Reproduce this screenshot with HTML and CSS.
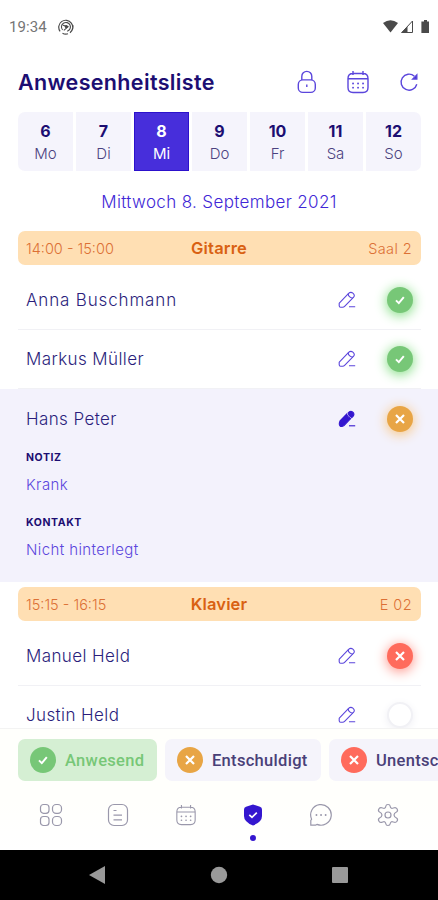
FILE: index.html
```html
<!DOCTYPE html>
<html lang="de">
<head>
    <meta charset="UTF-8">
    <meta name="viewport" content="width=device-width, initial-scale=1.0">
    <title>Anwesenheitsliste</title>
    <link rel="stylesheet" href="styles.css">
</head>
<body>
<!-- shared icons -->
<svg class="sprite" aria-hidden="true">
    <symbol id="check" viewBox="0 0 26 26">
        <path d="M9 13.4l2.8 2.7 5-6" fill="none" stroke="#fff" stroke-width="2"/>
    </symbol>
    <symbol id="cross" viewBox="0 0 26 26">
        <path d="M9 9l8 8M17 9l-8 8" fill="none" stroke="#fff" stroke-width="2.2"/>
    </symbol>
    <symbol id="pen" viewBox="0 0 18 18">
        <path d="M1.3 12.2L10.6 2.4Q12.7.4 14.9 2.1 17.4 4.2 15.4 6.5L6.6 15.4Q5.8 16.2 4.6 16.2H2.6Q1.2 16.2 1.2 14.7V13Q1.1 12.5 1.3 12.2Z"/>
        <path d="M10.2 2.8Q10.4 6.6 14.8 7.1M11 15.8h6.2"/>
    </symbol>
    <symbol id="pen-filled" viewBox="0 0 18 18">
        <path d="M2 11L8.6 4.2Q9.2 6.8 12.6 8.6L6 15.6Q4 17 2.2 16.2 1 15.6 1.3 13Z"/>
        <path d="M10 3Q12.2.4 14.6 1.9 17 4 15 6.4L13.8 7.6Q10.8 6.4 10 3Z"/>
        <path d="M11 15.8h6.2"/>
    </symbol>
    <symbol id="calendar" viewBox="0 0 22 24">
        <path d="M6 3.5h10q5 0 5 5v9q0 5-5 5H6q-5 0-5-5v-9q0-5 5-5ZM1 8.8h20M6 1v4M16 1v4"/>
        <path class="dots" d="M6 13.5h.1M11 13.5h.1M16 13.5h.1M6 17.7h.1M11 17.7h.1M16 17.7h.1"/>
    </symbol>
</svg>

<div class="screen">
    <div class="status-bar">
        <span class="clock">19:34</span>
        <svg width="16" height="16" viewBox="0 0 16 16" fill="none" stroke="#4a4a4a">
            <path d="M2.1 12.4A7 7 0 1 1 12 13.8M14.8 6.2A7 7 0 0 1 14.2 11M4.5 14.2A7 7 0 0 0 10 14.8" stroke-width="1.2"/>
            <path d="M4.6 11A4.5 4.5 0 1 1 9.2 12.3M5 6.2L10 7.8 5.8 11.3" stroke-width="1.1"/>
            <circle cx="8.3" cy="7.6" r="1.6" fill="#4a4a4a" stroke="none"/>
        </svg>
        <svg class="status-icons" width="48" height="16" viewBox="0 0 48 16" fill="#4a4a4a">
            <path d="M0 4Q7.5-1.6 15 4L7.5 13.6Z"/>
            <path d="M29.5 2V13.5H18.8Z" fill="none" stroke="#4a4a4a"/>
            <path d="M24.5 7.5V14H18Z"/>
            <path d="M41 1h3v1.6h2V14h-7.6V2.6H41Z"/>
        </svg>
    </div>

    <header class="header">
        <h1>Anwesenheitsliste</h1>
        <div class="actions">
            <svg width="20" height="24" viewBox="0 0 20 24">
                <rect x="1.3" y="9.9" width="17" height="12.5" rx="4.5"/>
                <path d="M4.8 9.9V6.4a5 5 0 0 1 10 0v3.5M9.8 14.4v2.6"/>
            </svg>
            <svg width="22" height="24"><use href="#calendar"/></svg>
            <svg width="20" height="20" viewBox="0 0 20 20">
                <path d="M17.8 12.2A8 8 0 1 1 15.4 4.2"/>
                <path d="M17.8 3V7h-4Z" fill="#4027d6"/>
            </svg>
        </div>
    </header>

    <div class="week">
        <div class="day"><b>6</b><span>Mo</span></div>
        <div class="day"><b>7</b><span>Di</span></div>
        <div class="day active"><b>8</b><span>Mi</span></div>
        <div class="day"><b>9</b><span>Do</span></div>
        <div class="day"><b>10</b><span>Fr</span></div>
        <div class="day"><b>11</b><span>Sa</span></div>
        <div class="day"><b>12</b><span>So</span></div>
    </div>
    <div class="date">Mittwoch 8. September 2021</div>

    <main class="list">
        <div class="course">
            <span>14:00 - 15:00</span>
            <strong>Gitarre</strong>
            <span class="room">Saal 2</span>
        </div>
        <div class="student">
            <span class="name wide">Anna Buschmann</span>
            <svg class="pen"><use href="#pen"/></svg>
            <svg class="status present"><use href="#check"/></svg>
        </div>
        <div class="student">
            <span class="name">Markus Müller</span>
            <svg class="pen"><use href="#pen"/></svg>
            <svg class="status present"><use href="#check"/></svg>
        </div>
        <div class="open">
            <div class="student">
                <span class="name">Hans Peter</span>
                <svg class="pen filled"><use href="#pen-filled"/></svg>
                <svg class="status excused"><use href="#cross"/></svg>
            </div>
            <div class="details">
                <h2>NOTIZ</h2>
                <p>Krank</p>
                <h2>KONTAKT</h2>
                <p>Nicht hinterlegt</p>
            </div>
        </div>
        <div class="course">
            <span>15:15 - 16:15</span>
            <strong>Klavier</strong>
            <span class="room">E 02</span>
        </div>
        <div class="student">
            <span class="name">Manuel Held</span>
            <svg class="pen"><use href="#pen"/></svg>
            <svg class="status absent"><use href="#cross"/></svg>
        </div>
        <div class="student">
            <span class="name">Justin Held</span>
            <svg class="pen"><use href="#pen"/></svg>
            <svg class="status empty"></svg>
        </div>
    </main>

    <footer class="bottom">
        <div class="chips">
            <div class="chip selected"><svg class="badge present"><use href="#check"/></svg><span>Anwesend</span></div>
            <div class="chip second"><svg class="badge excused"><use href="#cross"/></svg><span>Entschuldigt</span></div>
            <div class="chip third"><svg class="badge absent"><use href="#cross"/></svg><span>Unentschuldigt</span></div>
        </div>
        <nav class="tabs">
            <svg width="24" height="24" viewBox="0 0 24 24">
                <rect x="1.5" y="1.5" width="8.5" height="8.8" rx="3"/>
                <rect x="13.5" y="1.5" width="9" height="8.8" rx="3.6"/>
                <rect x="1.5" y="13.5" width="8.5" height="9" rx="3"/>
                <rect x="13.5" y="13.5" width="9" height="9" rx="3.6"/>
            </svg>
            <svg width="24" height="24" viewBox="0 0 24 24">
                <rect x="2.5" y="1.5" width="19" height="21" rx="5.5"/>
                <path d="M7.5 7.5h3M7.5 12.2h8.5M7.5 16.8h8.5"/>
            </svg>
            <svg width="24" height="24" viewBox="0 0 24 24"><use href="#calendar" x="1.5" y="1" width="21" height="22"/></svg>
            <div class="tab-active">
                <svg width="24" height="24" viewBox="0 0 24 24">
                    <path d="M12 1.5L19 3.8Q21 4.5 21 6.5V13Q21 19 12 22.5 3 19 3 13V6.5Q3 4.5 5 3.8Z" fill="#3417cf" stroke="none"/>
                    <path d="M8.3 11.8l2.7 2.6 4.8-4.8" stroke="#fff" stroke-width="1.7"/>
                </svg>
            </div>
            <svg width="24" height="24" viewBox="0 0 24 24">
                <path d="M1.8 22.2V17.5L2.6 16.2A10.3 10.3 0 1 1 8 21.4L6.5 22.2Z"/>
                <path class="dots" d="M7.4 12h.1M12 12h.1M16.6 12h.1"/>
            </svg>
            <svg width="24" height="24" viewBox="0 0 24 24">
                <path d="M9.8 3.2Q10 1.5 12 1.5T14.2 3.2Q14.5 6.1 17.3 5 19.8 3.8 21 5.8T20.8 8.8Q18 10.2 18 12T20.8 15.2Q22.2 16.3 21 18.2T17.3 19Q14.5 17.9 14.2 20.8 14 22.5 12 22.5T9.8 20.8Q9.5 17.9 6.7 19 4.2 20.2 3 18.2T3.2 15.2Q6 13.8 6 12T3.2 8.8Q1.8 7.7 3 5.8T6.7 5Q9.5 6.1 9.8 3.2Z"/>
                <circle cx="12" cy="12" r="3"/>
            </svg>
        </nav>
    </footer>

    <div class="android-nav">
        <svg width="18" height="20"><path d="M17 1V19L1 10Z"/></svg>
        <svg width="18" height="18"><circle cx="9" cy="9" r="8.2"/></svg>
        <svg width="18" height="18"><rect x="1" y="1" width="16" height="16" rx="1"/></svg>
    </div>
</div>
</body>
</html>
```
FILE: styles.css
```css
* {
    box-sizing: border-box;
}
body {
    margin: 0;
    font-family: Inter, sans-serif;
    color: #2b1e7c;
}
.sprite {
    display: none;
}
.screen {
    display: flex;
    flex-direction: column;
    width: 438px;
    height: 900px;
    overflow: hidden;
    background: #fff;
}

/* top */
.status-bar {
    display: flex;
    align-items: center;
    height: 54px;
    padding: 0 7px 0 9px;
    font-family: Roboto, sans-serif;
    font-size: 15px;
    color: #757575;
}
.clock {
    width: 49px;
    letter-spacing: 0.1px;
}
.status-icons {
    margin-left: auto;
}
.header {
    display: flex;
    align-items: center;
    justify-content: space-between;
    height: 58px;
    padding: 0 19px 2px 18px;
}
h1 {
    margin: 0;
    font-size: 21.5px;
    font-weight: 600;
    letter-spacing: 0.35px;
    color: #1c0e72;
}
.actions {
    display: flex;
    align-items: center;
    gap: 30px;
}
.actions svg {
    fill: none;
    stroke: #5b46dc;
    stroke-width: 1.4;
}
.dots {
    stroke-width: 1.8;
    stroke-linecap: round;
}
.week {
    display: grid;
    grid-template-columns: repeat(7, 55px);
    gap: 3px;
    height: 59px;
    padding-left: 18px;
}
.day {
    display: flex;
    flex-direction: column;
    align-items: center;
    padding-top: 8px;
    background: #f5f4fc;
    font-size: 15px;
    font-weight: 300;
    line-height: 24px;
    color: #4b4280;
}
.day b {
    height: 22px;
    font-size: 16px;
    font-weight: 700;
    line-height: 22px;
    color: #1c0e72;
}
.day:first-child {
    border-radius: 7px 0 0 7px;
}
.day:last-child {
    border-radius: 0 7px 7px 0;
}
.day.active {
    background: #472edb;
    border: 1px solid #2c11cc;
    padding-top: 7px;
    color: #fff;
    font-weight: 400;
}
.day.active b {
    color: #fff;
}
.date {
    height: 60px;
    line-height: 62px;
    text-align: center;
    font-size: 17px;
    font-weight: 300;
    letter-spacing: 0.35px;
    color: #4027d6;
}

/* student list */
.list {
    height: 497px;
    overflow: hidden;
}
.course {
    display: grid;
    grid-template-columns: 1fr 1fr 1fr;
    align-items: center;
    height: 34px;
    margin: 0 17px 5px 18px;
    padding: 0 9px 0 8px;
    border-radius: 7px;
    background: #ffdfb3;
    font-size: 14.5px;
    color: #dc7035;
    font-weight: 300;
}
.course strong {
    text-align: center;
    font-size: 16.5px;
    font-weight: 600;
    letter-spacing: 0.15px;
    color: #d96112;
}
.room {
    text-align: right;
    letter-spacing: 0.4px;
}
.student {
    display: flex;
    align-items: center;
    height: 59.5px;
    margin: 0 17px 0 18px;
    padding: 1px 8px 0;
    border-bottom: 1px solid #f1f1f5;
}
.name {
    flex: 1;
    font-size: 17px;
    font-weight: 300;
    letter-spacing: 0.4px;
}
.name.wide {
    letter-spacing: 0.85px;
}
.pen {
    width: 18px;
    height: 18px;
    margin-right: 31px;
    fill: none;
    stroke: #5b46dc;
    stroke-width: 1.1;
}
.pen.filled {
    fill: #3417cf;
    stroke: #3417cf;
}
.status,
.badge {
    width: 26px;
    height: 26px;
    border-radius: 50%;
}
.present {
    background: #77c777;
}
.excused {
    background: #e8a545;
}
.absent {
    background: #ff6b5c;
}
.status.present {
    box-shadow: 0 2px 12px 1px #8be08b;
}
.status.excused {
    box-shadow: 0 2px 12px 1px #f8c98a;
}
.status.absent {
    box-shadow: 0 2px 12px 1px #ff9c92;
}
.status.empty {
    background: #fff;
    border: 2px solid #f1f1f5;
    box-shadow: 0 2px 9px #efeff4;
}
.open {
    height: 193px;
    margin-bottom: 5px;
    background: #f3f2fc;
}
.open .student {
    border: 0;
    padding-top: 0;
}
.details {
    padding-left: 26px;
}
.details h2 {
    margin: 0;
    font-size: 10.5px;
    line-height: 18px;
    font-weight: 700;
    letter-spacing: 0.6px;
    color: #1c0e72;
}
.details p {
    margin: 7px 0 18px;
    font-size: 15px;
    line-height: 22px;
    font-weight: 300;
    letter-spacing: 0.4px;
    color: #5b46dc;
}

/* bottom */
.bottom {
    height: 122px;
    border-top: 1px solid #f3f3f3;
    background: linear-gradient(#fffffc, #fffffc 60%, #fff);
}
.chips {
    display: flex;
    gap: 8px;
    padding: 10px 0 0 18px;
}
.chip {
    display: flex;
    flex: none;
    align-items: center;
    gap: 9px;
    width: 139px;
    height: 42px;
    padding-left: 12px;
    border-radius: 7px;
    background: #f5f4fb;
    font-family: Roboto, sans-serif;
    font-size: 16.5px;
    font-weight: 500;
    letter-spacing: 0.3px;
    color: #494078;
}
.chip.selected {
    background: #d5efd3;
    color: #77c777;
}
.chip.second {
    width: 156px;
}
.chip.third {
    width: 176px;
}
.tabs {
    display: flex;
    justify-content: space-between;
    padding: 22px 38px 0 39px;
}
.tabs svg {
    display: block;
    fill: none;
    stroke: #9a98ab;
    stroke-width: 1.2;
}
.tab-active::after {
    content: "";
    display: block;
    width: 6px;
    height: 6px;
    margin: 8px auto 0;
    border-radius: 50%;
    background: #3417cf;
}
.android-nav {
    display: flex;
    flex: 1;
    align-items: center;
    justify-content: space-between;
    padding: 0 89px 0 88px;
    background: #000;
    fill: #999;
}
```
